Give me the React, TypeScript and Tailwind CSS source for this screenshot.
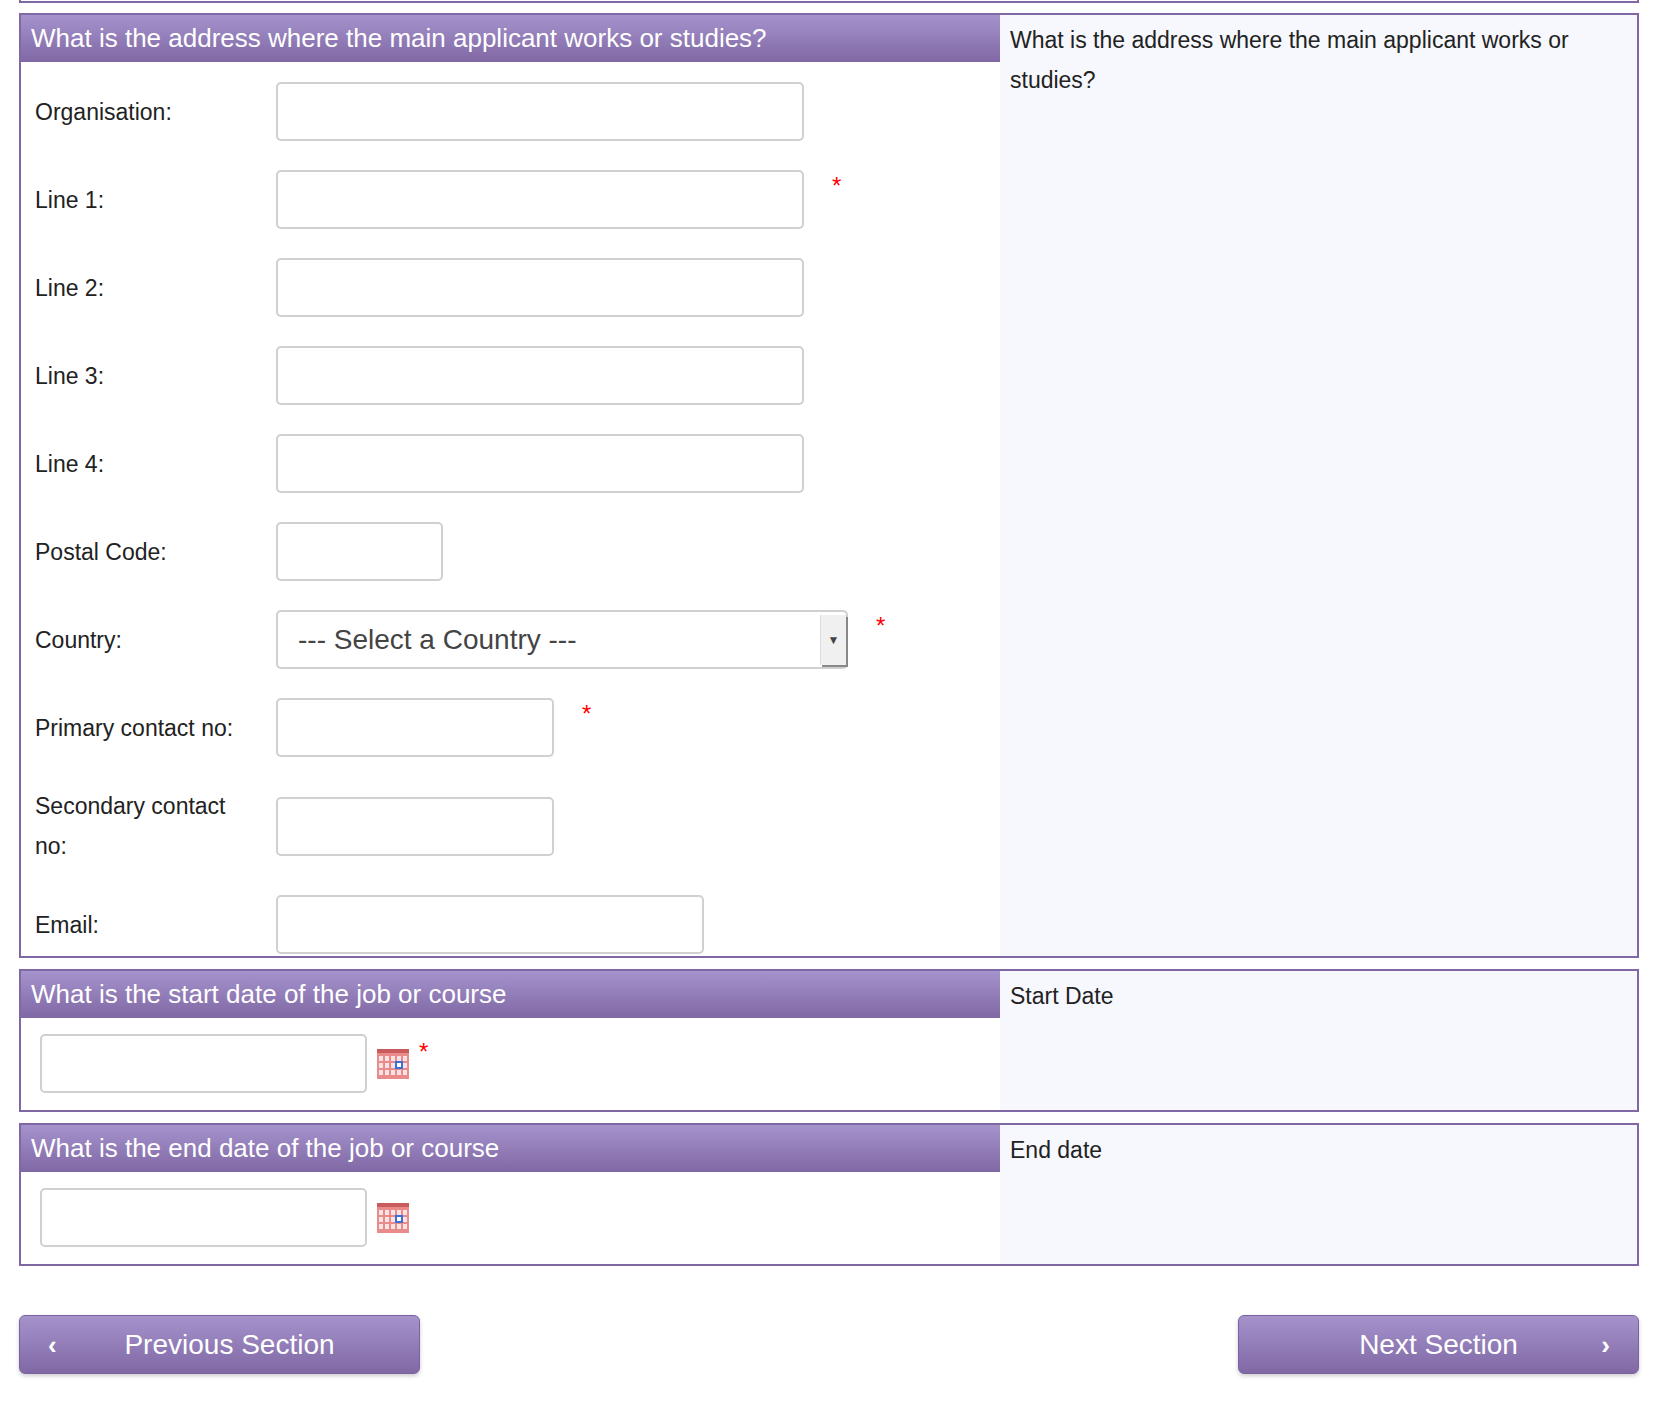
const font = { fontFamily: '"Liberation Sans", Arial, sans-serif' };

function Star() {
  return <span className="text-[24px] leading-none text-[#f00]">*</span>;
}

function Calendar() {
  return (
    <svg width="32" height="30" viewBox="0 0 32 30" className="shrink-0">
      <rect x="0" y="2" width="32" height="28" fill="#e98b8b" />
      <rect x="0" y="0" width="32" height="4" fill="#c85b5b" />
      {[0, 1, 2, 3, 4].map((c) =>
        [0, 1, 2].map((r) => (
          <rect key={`${c}-${r}`} x={2 + c * 6} y={7 + r * 7} width="4" height="5" fill="#fbe3e3" />
        ))
      )}
      <rect x="19" y="13" width="6" height="6" fill="#fff" stroke="#3b6fd6" strokeWidth="2" />
    </svg>
  );
}

function Input({ w }: { w: string }) {
  return <input className={`${w} h-[59px] rounded-[5px] border-2 border-[#d0d0d0] bg-white px-3 text-[20px] outline-none`} />;
}

function Section({ title, help, children, h }: { title: string; help: string; children: React.ReactNode; h: string }) {
  return (
    <div className={`flex ${h} border-2 border-[#8068a5]`}>
      <div className="w-[979px] shrink-0">
        <div className="flex h-[47px] items-center bg-gradient-to-b from-[#a593cc] to-[#8068a4] px-[10px] text-[26px] text-white">{title}</div>
        {children}
      </div>
      <div className="flex-1 bg-[#f7f8fd] px-[10px] pt-[5px] text-[23px] leading-[40px] text-[#222]">{help}</div>
    </div>
  );
}

const rows: { label: string; w: string; star?: boolean; select?: boolean }[] = [
  { label: "Organisation:", w: "w-[528px]" },
  { label: "Line 1:", w: "w-[528px]", star: true },
  { label: "Line 2:", w: "w-[528px]" },
  { label: "Line 3:", w: "w-[528px]" },
  { label: "Line 4:", w: "w-[528px]" },
  { label: "Postal Code:", w: "w-[167px]" },
  { label: "Country:", w: "w-[572px]", star: true, select: true },
  { label: "Primary contact no:", w: "w-[278px]", star: true },
  { label: "Secondary contact no:", w: "w-[278px]" },
  { label: "Email:", w: "w-[428px]" },
];

export default function App() {
  return (
    <div style={font} className="min-h-[1408px] w-[1658px] bg-white text-[#222]">
      <div className="mx-[19px] h-[3px] border-b-2 border-x-2 border-[#8068a5]" />
      <div className="mx-[19px] mt-[10px] flex flex-col gap-[11px]">
        <Section title="What is the address where the main applicant works or studies?" help="What is the address where the main applicant works or studies?" h="h-[945px]">
          <div className="flex flex-col gap-[29px] pt-[20px]">
            {rows.map((r) => (
              <div key={r.label} className="flex items-center">
                <div className="w-[255px] shrink-0 pl-[14px] text-[23px] leading-[40px]">
                  {r.label === "Secondary contact no:" ? <>Secondary contact<br />no:</> : r.label}
                </div>
                {r.select ? (
                  <div className={`${r.w} flex h-[59px] items-center justify-between rounded-[5px] border-2 border-[#d0d0d0] bg-white pl-[20px] text-[28px] text-[#444]`}>
                    <span>--- Select a Country ---</span>
                    <span className="flex h-[50px] w-[26px] items-center justify-center border-l border-[#ddd] bg-[#f0f0f0] text-[12px] shadow-[2px_2px_0_#888]">▼</span>
                  </div>
                ) : (
                  <Input w={r.w} />
                )}
                {r.star && <span className="ml-[28px] -mt-[24px]"><Star /></span>}
              </div>
            ))}
          </div>
        </Section>
        <Section title="What is the start date of the job or course" help="Start Date" h="h-[143px]">
          <div className="flex items-center gap-[10px] pl-[19px] pt-[16px]">
            <Input w="w-[327px]" />
            <Calendar />
            <span className="-mt-[20px]"><Star /></span>
          </div>
        </Section>
        <Section title="What is the end date of the job or course" help="End date" h="h-[143px]">
          <div className="flex items-center gap-[10px] pl-[19px] pt-[16px]">
            <Input w="w-[327px]" />
            <Calendar />
          </div>
        </Section>
      </div>
      <div className="mx-[19px] mt-[49px] flex justify-between">
        <button className="relative flex h-[59px] w-[401px] items-center justify-center rounded-[6px] border border-[#7a63a0] bg-gradient-to-b from-[#a593cc] to-[#8068a4] pl-[20px] text-[28px] text-white shadow-[0_2px_4px_rgba(0,0,0,0.2)]">
          <span className="absolute left-[28px] top-[10px] text-[26px] font-bold">‹</span>
          Previous Section
        </button>
        <button className="relative flex h-[59px] w-[401px] items-center justify-center rounded-[6px] border border-[#7a63a0] bg-gradient-to-b from-[#a593cc] to-[#8068a4] text-[28px] text-white shadow-[0_2px_4px_rgba(0,0,0,0.2)]">
          Next Section
          <span className="absolute right-[28px] top-[10px] text-[26px] font-bold">›</span>
        </button>
      </div>
    </div>
  );
}
